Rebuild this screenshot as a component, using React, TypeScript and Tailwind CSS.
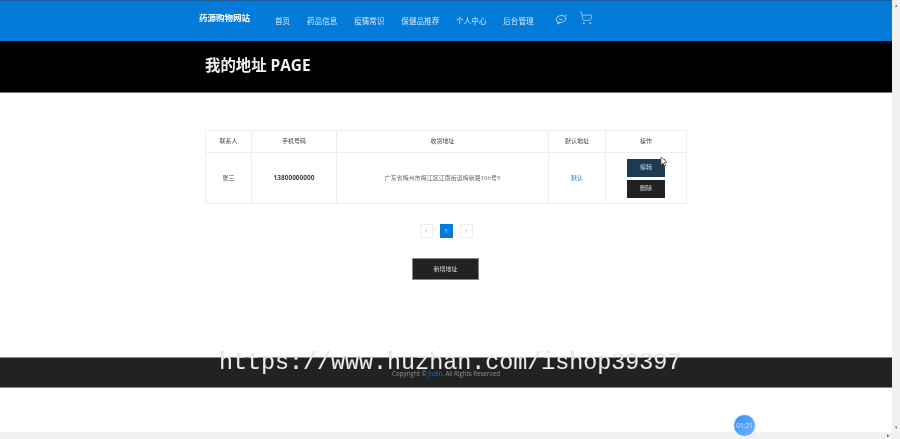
import React from 'react';
import { ChevronLeft, ChevronRight, ShoppingCart } from 'lucide-react';

const navItems = ['首页', '药品信息', '疫情常识', '保健品推荐', '个人中心', '后台管理'];
const cjk = `font-['Open_Sans','Noto_Sans_CJK_SC',sans-serif]`;

const App = () => {
  return (
    <div className={`relative flex h-[439px] w-[900px] flex-col overflow-hidden bg-white blur-[0.35px] ${cjk}`}>
      <div className="flex min-h-0 flex-1">
        <div className="flex min-w-0 flex-1 flex-col">
          <header className="flex h-[41px] shrink-0 border-t border-[#1b5d9e] bg-[#047ad9] pl-[199px] text-white">
            <div className="mt-[11px] h-[12px] text-[8.5px] leading-[12px] font-bold">药源购物网站</div>
            <nav className="mt-[14px] ml-[25px] flex h-[12px] gap-[16.8px] text-[7.6px] leading-[12px] text-[#d5e9f9]">
              {navItems.map((item) => (
                <span key={item}>{item}</span>
              ))}
            </nav>
            <div className="mt-[11px] ml-[21px] flex h-[14px] items-start gap-[11px] text-[#b5dcf7]">
              <svg width="13" height="11" viewBox="0 0 13 11" fill="none" stroke="currentColor" strokeWidth="0.9" className="mt-[2px]">
                <ellipse cx="6" cy="5" rx="5" ry="3.4" transform="rotate(-12 6 5)" />
                <path d="M3 8 2.5 10.2 5.5 8.4M4 5.4h3.5M10 .8l1.600.9" />
              </svg>
              <ShoppingCart size={14} strokeWidth={1.2} className="mt-[-1px]" />
            </div>
          </header>

          <section className="flex h-[52px] shrink-0 items-center border-b border-[#777] bg-black pb-[1px] pl-[205px] text-[15.4px] font-bold text-[#f2f2f2]">
            我的地址 PAGE
          </section>

          <main className="flex min-h-0 flex-1 flex-col items-center">
            <table className="mt-[37px] w-[481px] table-fixed border-collapse border border-[#eeeeee] text-center text-[6px] text-[#444]">
              <colgroup>
                <col className="w-[46px]" />
                <col className="w-[85px]" />
                <col className="w-[212px]" />
                <col className="w-[57px]" />
                <col className="w-[81px]" />
              </colgroup>
              <thead>
                <tr className="h-[22px]">
                  <th className="border border-[#eeeeee] font-normal">联系人</th>
                  <th className="border border-[#eeeeee] font-normal">手机号码</th>
                  <th className="border border-[#eeeeee] font-normal">收货地址</th>
                  <th className="border border-[#eeeeee] font-normal">默认地址</th>
                  <th className="border border-[#eeeeee] font-normal">操作</th>
                </tr>
              </thead>
              <tbody>
                <tr className="h-[51px]">
                  <td className="border border-[#eeeeee]">张三</td>
                  <td className="border border-[#eeeeee] text-[6.5px] font-bold">13800000000</td>
                  <td className="border border-[#eeeeee] text-[#666]">广东省梅州市梅江区江南街道梅新路106号5</td>
                  <td className="border border-[#eeeeee] text-[#2f78b7]">默认</td>
                  <td className="border border-[#eeeeee]">
                    <div className="flex flex-col items-center gap-[3px] text-[#cfd8dc]">
                      <button className="h-[18px] w-[38px] bg-[#1c3a52]">编辑</button>
                      <button className="h-[18px] w-[38px] bg-[#222222]">删除</button>
                    </div>
                  </td>
                </tr>
              </tbody>
            </table>

            <div className="mt-[20px] flex items-center gap-[7px] text-[6px] text-[#999]">
              <span className="flex h-[14px] w-[13px] items-center justify-center border border-[#eeeeee]">
                <ChevronLeft size={6} />
              </span>
              <span className="flex h-[14px] w-[13px] items-center justify-center bg-[#047ad9] text-[#cfe6f8]">1</span>
              <span className="flex h-[14px] w-[13px] items-center justify-center border border-[#eeeeee]">
                <ChevronRight size={6} />
              </span>
            </div>

            <button className="mt-[20px] mr-[1px] h-[22px] w-[67px] border border-[#888] bg-[#222222] text-[6px] text-[#ddd]">新增地址</button>
          </main>

          <footer className="h-[31px] shrink-0 border-y border-[#888] bg-[#222222] pt-[11px] text-center text-[6.2px] leading-[9px] text-[#8a8fa0]">
            Copyright © <span className="text-[#1e6fc0]">jiulin</span>. All Rights Reserved
          </footer>
          <div className="h-[44px] shrink-0" />
        </div>

        <aside className="flex w-[8px] shrink-0 flex-col justify-between bg-[#f1f1f1] py-[2px] text-[5px] leading-[6px] text-[#777]">
          <span className="text-center">▴</span>
          <span className="text-center">▾</span>
        </aside>
      </div>

      <div className="flex h-[7px] shrink-0 items-center justify-end bg-[#f1f1f1] pr-[10px] text-[5px] text-[#555]">
        <span>▸</span>
      </div>

      <div className="absolute top-[350px] left-[219px] font-['Liberation_Mono',monospace] text-[23.35px] leading-[26px] whitespace-nowrap text-[#f0f0f0] [-webkit-text-stroke:0.2px_#aaa]">
        https://www.huzhan.com/ishop39397
      </div>

      <div className="absolute top-[415px] left-[734px] flex h-[21px] w-[21px] items-center justify-center rounded-full bg-gradient-to-br from-[#3a8df5] to-[#6fb3fb] text-[6.5px] text-[#d8eafc] shadow-[0_0_3px_#cfe3fb]">
        01:21
      </div>

      <svg width="8" height="11" viewBox="0 0 8 11" className="absolute top-[156px] left-[660px]">
        <path d="M1 1v8l2-2 1.500 3 1.300-.6L4.400 6.500 7 6z" fill="#fff" stroke="#444" strokeWidth="0.7" />
      </svg>
    </div>
  );
};

export default App;
